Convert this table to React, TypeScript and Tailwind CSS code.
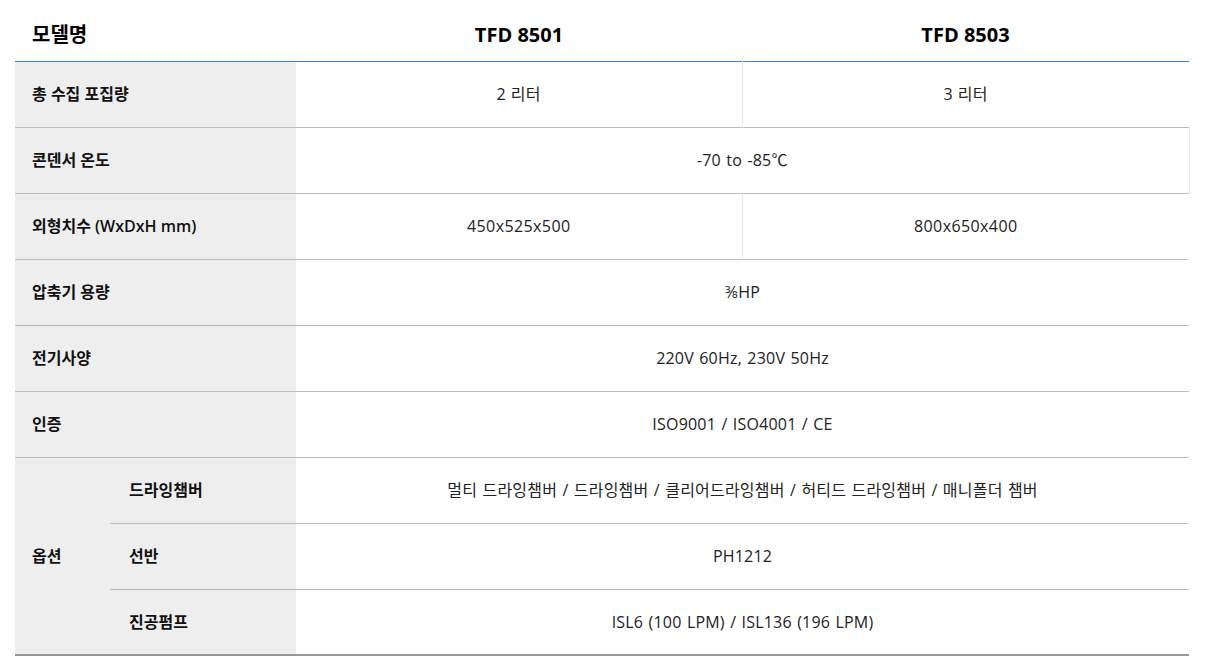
import React from "react"

type Row =
  | { label: string; values: [string, string] }
  | { label: string; value: string; edge?: boolean }

const ROWS: Row[] = [
  { label: "총 수집 포집량", values: ["2 리터", "3 리터"] },
  { label: "콘덴서 온도", value: "-70 to -85℃", edge: true },
  { label: "외형치수 (WxDxH mm)", values: ["450x525x500", "800x650x400"] },
  { label: "압축기 용량", value: "⅜HP" },
  { label: "전기사양", value: "220V 60Hz, 230V 50Hz" },
  { label: "인증", value: "ISO9001 / ISO4001 / CE" },
]

const OPTIONS = [
  { label: "드라잉챔버", value: "멀티 드라잉챔버 / 드라잉챔버 / 클리어드라잉챔버 / 허티드 드라잉챔버 / 매니폴더 챔버" },
  { label: "선반", value: "PH1212" },
  { label: "진공펌프", value: "ISL6 (100 LPM) / ISL136 (196 LPM)" },
]

const FONT = "font-['Open_Sans','Noto_Sans_CJK_KR',sans-serif]"

export default function App() {
  return (
    <div className={`bg-white min-h-[672px] px-[15px] pt-0 ${FONT} text-[#222]`}>
      <table className="w-[1174px] border-collapse table-fixed">
        <colgroup>
          <col className="w-[95px]" />
          <col className="w-[186px]" />
          <col className="w-[446px]" />
          <col className="w-[447px]" />
        </colgroup>
        <thead>
          <tr className="h-[61px] border-b border-[#2f87da]">
            <th colSpan={2} className="text-left pl-[17px] pt-[10px] text-[20px] font-bold text-black">모델명</th>
            <th className="pt-[10px] text-[20px] font-bold text-black">TFD 8501</th>
            <th className="pt-[10px] text-[20px] font-bold text-black">TFD 8503</th>
          </tr>
        </thead>
        <tbody className="text-[16px]">
          {ROWS.map((r) => (
            <tr key={r.label} className="h-[66px] border-b border-[#bdbdbd]">
              <td colSpan={2} className="bg-[#eeeeee] pl-[17px] font-semibold text-[#111]">{r.label}</td>
              {"values" in r ? (
                <>
                  <td className="text-center border-r border-[#e9e9e9] tracking-[0.4px]">{r.values[0]}</td>
                  <td className="text-center tracking-[0.4px]">{r.values[1]}</td>
                </>
              ) : (
                <td colSpan={2} className={`text-center tracking-[0.2px] [word-spacing:1px] ${r.edge ? "border-r border-[#e9e9e9]" : ""}`}>{r.value}</td>
              )}
            </tr>
          ))}
          {OPTIONS.map((o, i) => (
            <tr
              key={o.label}
              className={`h-[66px] ${i === OPTIONS.length - 1 ? "border-b-2 border-[#999999]" : "border-b border-[#bdbdbd]"}`}
            >
              {i === 0 && (
                <td rowSpan={3} className="bg-[#eeeeee] pl-[17px] font-semibold text-[#111] border-b-2 border-[#999999]">옵션</td>
              )}
              <td className="bg-[#eeeeee] pl-[19px] font-semibold text-[#111]">{o.label}</td>
              <td colSpan={2} className="text-center tracking-[0.2px] [word-spacing:1px]">{o.value}</td>
            </tr>
          ))}
        </tbody>
      </table>
    </div>
  )
}
